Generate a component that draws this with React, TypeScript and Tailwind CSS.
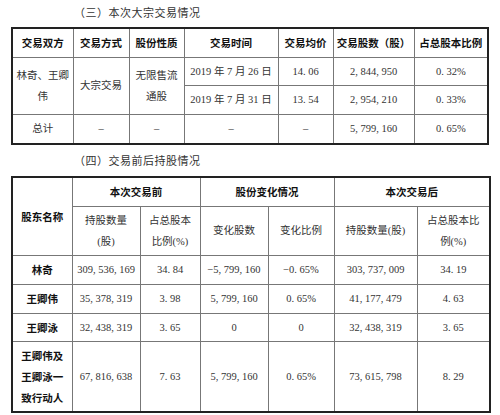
import React from 'react';

const serif = "font-['Liberation_Serif','Noto_Sans_CJK_SC',serif]";
const bold = "font-['Noto_Sans_CJK_SC',sans-serif] font-bold text-[#111]";

const td = `border border-[#777] text-center align-middle p-0 leading-[21px] ${serif} text-[#333]`;
const th = `border border-[#777] text-center align-middle p-0 leading-[21px] ${bold}`;

const Title: React.FC<{ children: React.ReactNode }> = ({ children }) => (
  <div className="pl-[74px] text-[11px] leading-[15px] text-[#333] font-['Noto_Sans_CJK_SC',sans-serif] tracking-[0.5px]">
    {children}
  </div>
);

export default function App() {
  return (
    <div className="w-[500px] h-[415px] bg-white overflow-hidden text-[10.5px]">
      <div className="pt-[5px]">
        <Title>（三）本次大宗交易情况</Title>
      </div>

      {/* 本次大宗交易情况 */}
      <table className="ml-[11px] mt-[7px] w-[476px] table-fixed border-collapse border-2 border-[#222]">
        <colgroup>
          <col className="w-[61px]" />
          <col className="w-[56px]" />
          <col className="w-[55px]" />
          <col className="w-[94px]" />
          <col className="w-[55px]" />
          <col className="w-[81px]" />
          <col className="w-[74px]" />
        </colgroup>
        <tbody>
          <tr className="h-[29px]">
            <td className={th}>交易双方</td>
            <td className={th}>交易方式</td>
            <td className={th}>股份性质</td>
            <td className={th}>交易时间</td>
            <td className={th}>交易均价</td>
            <td className={th}>交易股数（股）</td>
            <td className={th}>占总股本比例</td>
          </tr>
          <tr className="h-[28px]">
            <td className={td} rowSpan={2}>林奇、王卿<br />伟</td>
            <td className={td} rowSpan={2}>大宗交易</td>
            <td className={td} rowSpan={2}>无限售流<br />通股</td>
            <td className={td}>2019 年 7 月 26 日</td>
            <td className={td}>14. 06</td>
            <td className={td}>2, 844, 950</td>
            <td className={td}>0. 32%</td>
          </tr>
          <tr className="h-[29px]">
            <td className={td}>2019 年 7 月 31 日</td>
            <td className={td}>13. 54</td>
            <td className={td}>2, 954, 210</td>
            <td className={td}>0. 33%</td>
          </tr>
          <tr className="h-[30px]">
            <td className={td}>总计</td>
            <td className={td}>–</td>
            <td className={td}>–</td>
            <td className={td}>–</td>
            <td className={td}>–</td>
            <td className={td}>5, 799, 160</td>
            <td className={td}>0. 65%</td>
          </tr>
        </tbody>
      </table>

      <div className="mt-[8px]">
        <Title>（四）交易前后持股情况</Title>
      </div>

      {/* 交易前后持股情况 */}
      <table className="ml-[11px] mt-[8px] w-[478px] table-fixed border-collapse border-2 border-[#222]">
        <colgroup>
          <col className="w-[60px]" />
          <col className="w-[68px]" />
          <col className="w-[60px]" />
          <col className="w-[68px]" />
          <col className="w-[66px]" />
          <col className="w-[83px]" />
          <col className="w-[73px]" />
        </colgroup>
        <tbody>
          <tr className="h-[29px]">
            <td className={th} rowSpan={2}>股东名称</td>
            <td className={th} colSpan={2}>本次交易前</td>
            <td className={th} colSpan={2}>股份变化情况</td>
            <td className={th} colSpan={2}>本次交易后</td>
          </tr>
          <tr className="h-[49px]">
            <td className={td}>持股数量<br />(股)</td>
            <td className={td}>占总股本<br />比例(%)</td>
            <td className={td}>变化股数</td>
            <td className={td}>变化比例</td>
            <td className={td}>持股数量(股)</td>
            <td className={td}>占总股本比<br />例(%)</td>
          </tr>
          <tr className="h-[29px]">
            <td className={th}>林奇</td>
            <td className={td}>309, 536, 169</td>
            <td className={td}>34. 84</td>
            <td className={td}>−5, 799, 160</td>
            <td className={td}>−0. 65%</td>
            <td className={td}>303, 737, 009</td>
            <td className={td}>34. 19</td>
          </tr>
          <tr className="h-[29px]">
            <td className={th}>王卿伟</td>
            <td className={td}>35, 378, 319</td>
            <td className={td}>3. 98</td>
            <td className={td}>5, 799, 160</td>
            <td className={td}>0. 65%</td>
            <td className={td}>41, 177, 479</td>
            <td className={td}>4. 63</td>
          </tr>
          <tr className="h-[28px]">
            <td className={th}>王卿泳</td>
            <td className={td}>32, 438, 319</td>
            <td className={td}>3. 65</td>
            <td className={td}>0</td>
            <td className={td}>0</td>
            <td className={td}>32, 438, 319</td>
            <td className={td}>3. 65</td>
          </tr>
          <tr className="h-[71px]">
            <td className={th}>王卿伟及<br />王卿泳一<br />致行动人</td>
            <td className={td}>67, 816, 638</td>
            <td className={td}>7. 63</td>
            <td className={td}>5, 799, 160</td>
            <td className={td}>0. 65%</td>
            <td className={td}>73, 615, 798</td>
            <td className={td}>8. 29</td>
          </tr>
        </tbody>
      </table>
    </div>
  );
}
